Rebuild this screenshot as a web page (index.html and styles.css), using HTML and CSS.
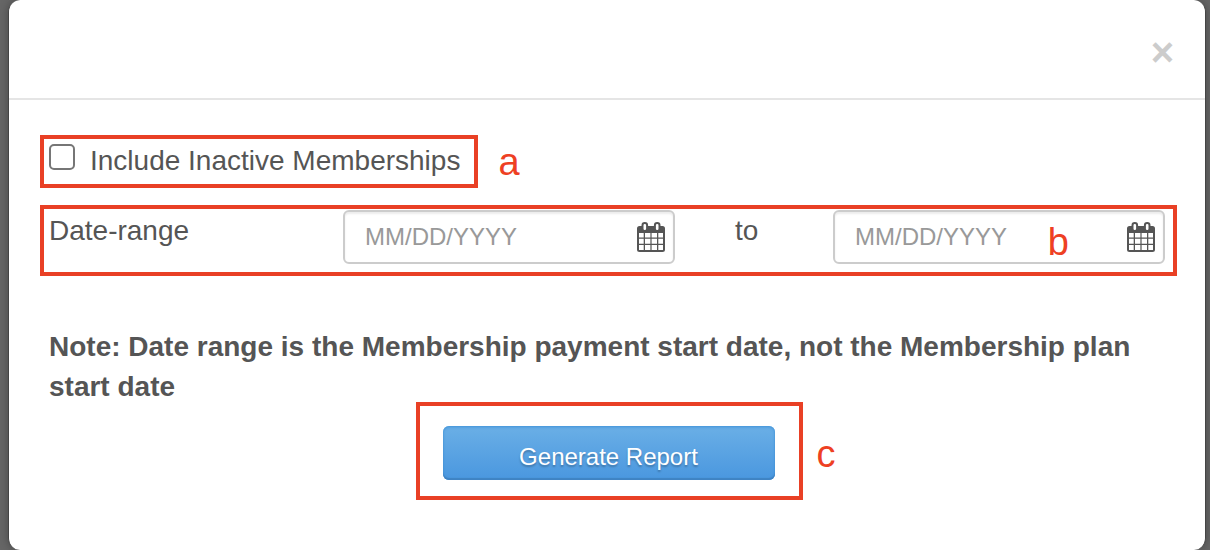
FILE: index.html
```html
<!DOCTYPE html>
<html lang="en">
<head>
<meta charset="utf-8">
<title>Generate Report</title>
<link rel="stylesheet" href="styles.css">
</head>
<body>
<svg class="sprite" aria-hidden="true">
  <symbol id="calendar" viewBox="0 0 28 30">
    <path fill="#555" fill-rule="evenodd" d="M2.500 4H25.500Q28 4 28 6.500V27.500Q28 30 25.500 30H2.500Q0 30 0 27.500V6.500Q0 4 2.500 4ZM2 11V15.500H6.700V11ZM8 11V15.500H13.400V11ZM14.600 11V15.500H20V11ZM21.300 11V15.500H26V11ZM2 16.700V21.700H6.700V16.700ZM8 16.700V21.700H13.400V16.700ZM14.600 16.700V21.700H20V16.700ZM21.300 16.700V21.700H26V16.700ZM2 23V28H6.700V23ZM8 23V28H13.400V23ZM14.600 23V28H20V23ZM21.300 23V28H26V23Z"/>
    <rect x="5.500" y="1" width="4.600" height="8" rx="2.200" fill="#fff" stroke="#555" stroke-width="2"/>
    <rect x="17.900" y="1" width="4.600" height="8" rx="2.200" fill="#fff" stroke="#555" stroke-width="2"/>
  </symbol>
</svg>
<div class="modal" role="dialog" aria-label="Generate Report">
  <header class="modal-header">
    <button class="close" type="button" aria-label="Close">×</button>
  </header>
  <form class="modal-body">
    <div class="option-row">
      <label class="frame option"><input class="checkbox" type="checkbox"><span>Include Inactive Memberships</span></label>
      <span class="mark">a</span>
    </div>
    <div class="frame range">
      <label class="range-label" for="from">Date-range</label>
      <div class="field">
        <input class="date" id="from" type="text" placeholder="MM/DD/YYYY">
        <svg class="calendar" aria-hidden="true"><use href="#calendar"/></svg>
      </div>
      <label class="range-label range-to" for="to">to</label>
      <div class="field">
        <input class="date" id="to" type="text" placeholder="MM/DD/YYYY">
        <span class="mark mark-b">b</span>
        <svg class="calendar" aria-hidden="true"><use href="#calendar"/></svg>
      </div>
    </div>
    <p class="note">Note: Date range is the Membership payment start date, not the Membership plan start date</p>
    <div class="actions">
      <button class="submit" type="button">Generate Report</button>
      <span class="frame action-frame"></span>
      <span class="mark mark-c">c</span>
    </div>
  </form>
</div>
</body>
</html>
```
FILE: styles.css
```css
* {
  box-sizing: border-box;
}

body {
  margin: 0;
  padding: 0 4px 0 8px;
  background: #666;
  color: #555;
  font: 28px/40px "Liberation Sans", Arial, sans-serif;
}

.sprite {
  position: absolute;
  width: 0;
  height: 0;
}

.modal {
  min-height: 100vh;
  border: solid #444;
  border-width: 0 1px;
  border-radius: 12px;
  background: #fff;
  box-shadow: 0 0 10px rgba(0, 0, 0, 0.3);
}

.modal-header {
  display: flex;
  justify-content: flex-end;
  padding: 32px 31px 26px;
  border-bottom: 2px solid #e5e5e5;
}

.close {
  padding: 0;
  border: 0;
  background: none;
  color: #ccc;
  font: bold 40px/40px "Liberation Sans", Arial, sans-serif;
}

.modal-body {
  padding: 35px 28px 70px 31px;
}

.frame {
  border: 4px solid #e94025;
}

.mark {
  color: #ee4023;
  font-size: 38px;
  line-height: 40px;
}

.option-row {
  display: flex;
  align-items: center;
  gap: 20px;
}

.option {
  display: flex;
  gap: 15px;
  padding: 2px 14px 3px 5px;
}

.checkbox {
  appearance: none;
  width: 26px;
  height: 26px;
  margin: 3px 0 0;
  border: 2px solid #767676;
  border-radius: 5px;
  background: #fff;
}

.range {
  display: grid;
  grid-template-columns: 294fr 332fr 158fr 332fr;
  margin-top: 17px;
  padding: 1px 8px 8px 5px;
}

.range-label {
  padding-top: 1px;
}

.range-to {
  padding-left: 60px;
}

.field {
  position: relative;
}

.date {
  display: block;
  width: 100%;
  height: 54px;
  padding: 0 60px 0 20px;
  border: 2px solid #ccc;
  border-radius: 6px;
  background: #fff;
  box-shadow: inset 0 2px 2px rgba(0, 0, 0, 0.08);
  color: #555;
  font: 24px/40px "Liberation Sans", Arial, sans-serif;
}

.date::placeholder {
  color: #999;
}

.calendar {
  position: absolute;
  top: 12px;
  right: 10px;
  width: 28px;
  height: 30px;
}

.mark-b {
  position: absolute;
  top: 12px;
  right: 96px;
}

.note {
  margin: 51px 0 19px;
  padding: 0 9px;
  font-weight: bold;
}

.actions {
  position: relative;
  width: 332px;
  margin: 0 auto;
}

.submit {
  display: block;
  width: 100%;
  height: 54px;
  padding: 8px 0 0;
  border: 0;
  border-radius: 6px;
  background: linear-gradient(#6aafe6, #4a97df);
  box-shadow: inset 0 -2px 1px #3f83c3, inset 0 1px 3px #3f92d8;
  color: #fff;
  font: 24px/40px "Liberation Sans", Arial, sans-serif;
  text-shadow: 0 2px 2px rgba(0, 0, 0, 0.25);
}

.action-frame {
  position: absolute;
  inset: -24px -28px -20px -27px;
  pointer-events: none;
}

.mark-c {
  position: absolute;
  top: 8px;
  left: calc(100% + 42px);
}
```
